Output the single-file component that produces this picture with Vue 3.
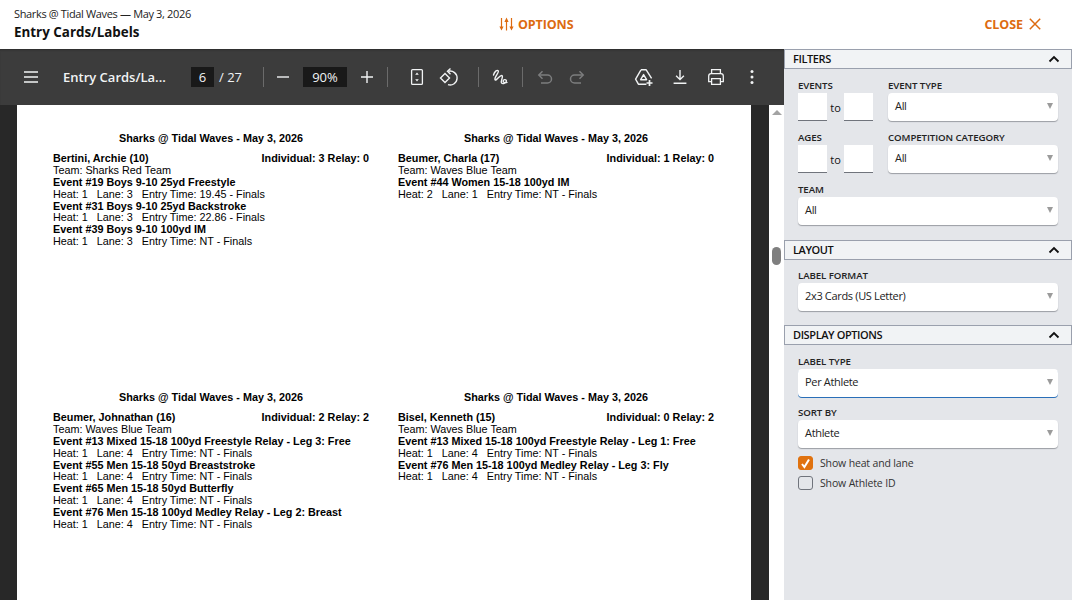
<script setup>
import { ref } from 'vue'

const cards = ref([
  {
    name: 'Bertini, Archie (10)',
    counts: 'Individual: 3 Relay: 0',
    team: 'Team: Sharks Red Team',
    entries: [
      { event: 'Event #19 Boys 9-10 25yd Freestyle', detail: ['Heat: 1', 'Lane: 3', 'Entry Time: 19.45 - Finals'] },
      { event: 'Event #31 Boys 9-10 25yd Backstroke', detail: ['Heat: 1', 'Lane: 3', 'Entry Time: 22.86 - Finals'] },
      { event: 'Event #39 Boys 9-10 100yd IM', detail: ['Heat: 1', 'Lane: 3', 'Entry Time: NT - Finals'] }
    ]
  },
  {
    name: 'Beumer, Charla (17)',
    counts: 'Individual: 1 Relay: 0',
    team: 'Team: Waves Blue Team',
    entries: [
      { event: 'Event #44 Women 15-18 100yd IM', detail: ['Heat: 2', 'Lane: 1', 'Entry Time: NT - Finals'] }
    ]
  },
  {
    name: 'Beumer, Johnathan (16)',
    counts: 'Individual: 2 Relay: 2',
    team: 'Team: Waves Blue Team',
    entries: [
      { event: 'Event #13 Mixed 15-18 100yd Freestyle Relay - Leg 3: Free', detail: ['Heat: 1', 'Lane: 4', 'Entry Time: NT - Finals'] },
      { event: 'Event #55 Men 15-18 50yd Breaststroke', detail: ['Heat: 1', 'Lane: 4', 'Entry Time: NT - Finals'] },
      { event: 'Event #65 Men 15-18 50yd Butterfly', detail: ['Heat: 1', 'Lane: 4', 'Entry Time: NT - Finals'] },
      { event: 'Event #76 Men 15-18 100yd Medley Relay - Leg 2: Breast', detail: ['Heat: 1', 'Lane: 4', 'Entry Time: NT - Finals'] }
    ]
  },
  {
    name: 'Bisel, Kenneth (15)',
    counts: 'Individual: 0 Relay: 2',
    team: 'Team: Waves Blue Team',
    entries: [
      { event: 'Event #13 Mixed 15-18 100yd Freestyle Relay - Leg 1: Free', detail: ['Heat: 1', 'Lane: 4', 'Entry Time: NT - Finals'] },
      { event: 'Event #76 Men 15-18 100yd Medley Relay - Leg 3: Fly', detail: ['Heat: 1', 'Lane: 4', 'Entry Time: NT - Finals'] }
    ]
  }
])

const showHeat = ref(true)
const showId = ref(false)
</script>

<template>
  <div class="app">
    <header class="top">
      <div class="top-title">
        <div class="meet">Sharks @ Tidal Waves — May 3, 2026</div>
        <div class="name">Entry Cards/Labels</div>
      </div>
      <button class="link options">
        <svg width="15" height="14" viewBox="0 0 15 14" fill="#dd6b10">
          <path d="M1.9 1h1.2v8.6h1.5L2.5 13.6.4 9.6h1.5zM6.9 5H5.4L7.5.5 9.6 5H8.1v8.5H6.9zM11.9 1h1.2v8.6h1.5l-2.1 4-2.1-4h1.5z" />
        </svg>
        OPTIONS
      </button>
      <button class="link close">
        CLOSE
        <svg width="12" height="12" viewBox="0 0 12 12" fill="none" stroke="#dd6b10" stroke-width="1.5">
          <path d="M.8.8l10.4 10.4M11.2.8L.8 11.2" />
        </svg>
      </button>
    </header>

    <div class="main">
      <section class="viewer">
        <div class="toolbar">
          <button class="tb-btn">
            <svg width="20" height="20" viewBox="0 0 20 20" stroke="#f1f3f4" stroke-width="1.5"><path d="M3 5h14M3 10h14M3 15h14" /></svg>
          </button>
          <span class="doc-title">Entry Cards/La...</span>
          <span class="page-box">6</span>
          <span class="page-total">/ 27</span>
          <span class="divider first"></span>
          <div class="tb-group">
            <button class="tb-btn">
              <svg width="20" height="20" viewBox="0 0 20 20" stroke="#f1f3f4" stroke-width="1.4"><path d="M4 10h12" /></svg>
            </button>
            <span class="zoom-box">90%</span>
            <button class="tb-btn">
              <svg width="20" height="20" viewBox="0 0 20 20" stroke="#f1f3f4" stroke-width="1.4"><path d="M4 10h12M10 4v12" /></svg>
            </button>
            <span class="divider"></span>
          </div>
          <div class="tb-group tight">
            <button class="tb-btn">
              <svg width="20" height="20" viewBox="0 0 20 20" fill="none" stroke="#f1f3f4" stroke-width="1.3">
                <rect x="4.6" y="2.6" width="10.8" height="14.8" rx="1" />
                <path d="M10 5.5l-1.8 2.2h3.6zM10 14.5l-1.8-2.2h3.6z" fill="#f1f3f4" stroke="none" />
              </svg>
            </button>
            <button class="tb-btn">
              <svg width="20" height="20" viewBox="0 0 20 20" fill="none" stroke="#f1f3f4" stroke-width="1.4">
                <path d="M9.5 4.2A7 7 0 1 1 9 17.7" />
                <path d="M11.5 1.5L8.5 4.3l3 2.9" />
                <path d="M6 6.5L1.5 11 6 15.5l4.5-4.5z" />
              </svg>
            </button>
          </div>
          <span class="divider sep-draw"></span>
          <button class="tb-btn draw">
            <svg width="20" height="20" viewBox="0 0 20 20" fill="none" stroke="#f1f3f4" stroke-width="1.4" stroke-linecap="round">
              <path d="M3.5 8C4.5 4.5 7 2.5 8.2 3.8c1.3 1.5-4 6-3.2 8.8.7 2.4 5-5 7-4 1.8.9-2 5.6-.4 7.4 1.4 1.5 5.2-.4 4.8-2.4-.3-1.5-3.4-1.2-3.2.6.1 1.4 2 1.8 3.8 1.2" />
            </svg>
          </button>
          <span class="divider sep-undo"></span>
          <div class="tb-group tight undo">
            <button class="tb-btn">
              <svg width="20" height="20" viewBox="0 0 20 20" fill="none" stroke="#7c7d7e" stroke-width="1.5">
                <path d="M6 16h6.5a4 4 0 0 0 0-8H4" />
                <path d="M7.5 4.3L3.8 8l3.7 3.7" />
              </svg>
            </button>
            <button class="tb-btn">
              <svg width="20" height="20" viewBox="0 0 20 20" fill="none" stroke="#7c7d7e" stroke-width="1.5">
                <path d="M14 16H7.5a4 4 0 0 1 0-8H16" />
                <path d="M12.5 4.3L16.2 8l-3.7 3.7" />
              </svg>
            </button>
          </div>
          <div class="tb-group right">
            <button class="tb-btn">
              <svg width="20" height="20" viewBox="0 0 20 20" fill="none" stroke="#f1f3f4" stroke-width="1.4" stroke-linejoin="round">
                <path d="M7 2.8h5.2l5.4 8.6M7 2.8L1.6 12.2l2.8 5h8" />
                <path d="M9.6 7.6l3 5.1H6.7z" />
                <path d="M15.5 13v6M12.5 16h6" stroke-width="1.7" />
              </svg>
            </button>
            <button class="tb-btn">
              <svg width="20" height="20" viewBox="0 0 20 20" fill="#f1f3f4">
                <path d="M10 13.6L5.6 9.2l1-1 2.7 2.7V3h1.4v7.9l2.7-2.7 1 1zM3.6 17v-1.5h12.8V17z" />
              </svg>
            </button>
            <button class="tb-btn">
              <svg width="20" height="20" viewBox="0 0 20 20" fill="none" stroke="#f1f3f4" stroke-width="1.3">
                <path d="M5.6 6.4V2.7h8.8v3.7" />
                <path d="M5.6 14.6H2.7V9a2.4 2.4 0 0 1 2.4-2.4h9.8A2.4 2.4 0 0 1 17.3 9v5.6h-2.9" />
                <path d="M5.6 11.6h8.8v5.7H5.6z" />
              </svg>
            </button>
            <button class="tb-btn">
              <svg width="20" height="20" viewBox="0 0 20 20" fill="#f1f3f4">
                <circle cx="10" cy="4.5" r="1.5" />
                <circle cx="10" cy="10" r="1.5" />
                <circle cx="10" cy="15.5" r="1.5" />
              </svg>
            </button>
          </div>
        </div>

        <div class="pdf-area">
          <div class="page">
            <div v-for="card in cards" :key="card.name" class="card">
              <div class="card-head">Sharks @ Tidal Waves - May 3, 2026</div>
              <div class="card-top">
                <b>{{ card.name }}</b>
                <b>{{ card.counts }}</b>
              </div>
              <div>{{ card.team }}</div>
              <template v-for="entry in card.entries" :key="entry.event">
                <div><b>{{ entry.event }}</b></div>
                <div class="detail">
                  <span v-for="part in entry.detail" :key="part">{{ part }}</span>
                </div>
              </template>
            </div>
          </div>
          <div class="scrollbar">
            <span class="arrow"></span>
            <span class="thumb"></span>
          </div>
        </div>
      </section>

      <aside class="panel">
        <div class="sec-head">
          <span>FILTERS</span>
          <svg width="12" height="8" viewBox="0 0 12 8" fill="none" stroke="#111" stroke-width="1.8"><path d="M1.5 6.5L6 2l4.5 4.5" /></svg>
        </div>
        <div class="sec-body filters">
          <div class="field range">
            <label>EVENTS</label>
            <div class="range-row">
              <input type="text" class="num">
              <span>to</span>
              <input type="text" class="num">
            </div>
          </div>
          <div class="field">
            <label>EVENT TYPE</label>
            <div class="select">All<i></i></div>
          </div>
          <div class="field range">
            <label>AGES</label>
            <div class="range-row">
              <input type="text" class="num">
              <span>to</span>
              <input type="text" class="num">
            </div>
          </div>
          <div class="field">
            <label>COMPETITION CATEGORY</label>
            <div class="select">All<i></i></div>
          </div>
          <div class="field wide">
            <label>TEAM</label>
            <div class="select">All<i></i></div>
          </div>
        </div>

        <div class="sec-head">
          <span>LAYOUT</span>
          <svg width="12" height="8" viewBox="0 0 12 8" fill="none" stroke="#111" stroke-width="1.8"><path d="M1.5 6.5L6 2l4.5 4.5" /></svg>
        </div>
        <div class="sec-body">
          <div class="field">
            <label>LABEL FORMAT</label>
            <div class="select">2x3 Cards (US Letter)<i></i></div>
          </div>
        </div>

        <div class="sec-head">
          <span>DISPLAY OPTIONS</span>
          <svg width="12" height="8" viewBox="0 0 12 8" fill="none" stroke="#111" stroke-width="1.8"><path d="M1.5 6.5L6 2l4.5 4.5" /></svg>
        </div>
        <div class="sec-body stack">
          <div class="field">
            <label>LABEL TYPE</label>
            <div class="select focused">Per Athlete<i></i></div>
          </div>
          <div class="field">
            <label>SORT BY</label>
            <div class="select">Athlete<i></i></div>
          </div>
          <div class="checks">
            <div class="check" @click="showHeat = !showHeat">
              <span class="box" :class="{ on: showHeat }">
                <svg v-if="showHeat" width="11" height="11" viewBox="0 0 11 11" fill="none" stroke="#fff" stroke-width="2"><path d="M2 6l2.4 3L9 1.5" /></svg>
              </span>
              Show heat and lane
            </div>
            <div class="check" @click="showId = !showId">
              <span class="box" :class="{ on: showId }">
                <svg v-if="showId" width="11" height="11" viewBox="0 0 11 11" fill="none" stroke="#fff" stroke-width="2"><path d="M2 6l2.4 3L9 1.5" /></svg>
              </span>
              Show Athlete ID
            </div>
          </div>
        </div>
      </aside>
    </div>
  </div>
</template>

<style scoped>
.app {
  width: 1072px;
  height: 600px;
  display: flex;
  flex-direction: column;
  overflow: hidden;
  font-family: "Open Sans", sans-serif;
  color: #111;
  background: #fff;
}

button {
  border: none;
  background: none;
  padding: 0;
  font-family: inherit;
}

/* top bar */
.top {
  height: 49px;
  flex: none;
  display: flex;
  align-items: flex-start;
  position: relative;
}

.top-title {
  margin-left: 14px;
  width: 485px;
  padding-top: 5px;
}

.meet {
  font-size: 11px;
  letter-spacing: -0.35px;
  line-height: 17px;
  color: #222;
}

.name {
  font-size: 13.4px;
  font-weight: 700;
  line-height: 20px;
}

.link {
  display: flex;
  align-items: center;
  color: #dd6b10;
  font-size: 12.5px;
  font-weight: 700;
  letter-spacing: -0.1px;
  height: 16px;
  margin-top: 16px;
}

.options {
  gap: 4px;
}

.close {
  margin-left: 411px;
  gap: 6px;
}

/* pdf viewer */
.main {
  flex: 1;
  display: flex;
  min-height: 0;
}

.viewer {
  width: 784px;
  flex: none;
  display: flex;
  flex-direction: column;
  background: #282828;
}

.toolbar {
  height: 56px;
  flex: none;
  display: flex;
  align-items: center;
  padding: 0 16px 0 15px;
  background: #3c3c3c;
  color: #f1f3f4;
  box-shadow: inset 0 2px 2px -1px #2c2c2c;
}

.tb-btn {
  width: 32px;
  height: 32px;
  flex: none;
  display: flex;
  align-items: center;
  justify-content: center;
}

.tb-group {
  display: flex;
  align-items: center;
  gap: 4px;
}

.tb-group.tight {
  gap: 0;
  margin-left: 13px;
}

.tb-group.right {
  margin-left: auto;
}

.doc-title {
  width: 104px;
  margin-left: 16px;
  font-size: 13px;
  font-weight: 600;
  white-space: nowrap;
}

.page-box {
  width: 23px;
  height: 20px;
  margin-left: 24px;
  background: #191919;
  text-align: center;
  font-size: 13px;
  line-height: 20px;
}

.page-total {
  width: 28px;
  margin-left: 5px;
  font-size: 13px;
}

.divider {
  width: 1px;
  height: 20px;
  flex: none;
  background: #6b6b6b;
}

.divider.first {
  margin-left: 16px;
  margin-right: 3px;
}

.sep-draw {
  margin-left: 13px;
}

.draw {
  margin-left: 5px;
}

.sep-undo {
  margin-left: 6px;
}

.tb-group.tight.undo {
  margin-left: 6px;
}

.zoom-box {
  width: 44px;
  height: 20px;
  background: #191919;
  text-align: center;
  font-size: 13px;
  line-height: 20px;
}

/* pdf page */
.pdf-area {
  flex: 1;
  min-height: 0;
  display: flex;
  justify-content: space-between;
  padding-left: 17px;
  overflow: hidden;
}

.page {
  width: 734px;
  height: 760px;
  flex: none;
  background: #fff;
  display: grid;
  grid-template-columns: 316px 316px;
  grid-auto-rows: 259px;
  column-gap: 29px;
  padding: 28px 36px 0;
  box-sizing: border-box;
  color: #000;
  font-family: "Liberation Sans", Arial, sans-serif;
  font-size: 10.8px;
  line-height: 11.9px;
}

.card-head {
  text-align: center;
  font-weight: 700;
  margin-bottom: 8px;
}

.card-top {
  display: flex;
  justify-content: space-between;
}

.detail {
  display: flex;
  gap: 9px;
}

.scrollbar {
  width: 15px;
  flex: none;
  background: #fff;
  position: relative;
}

.arrow {
  position: absolute;
  top: 5px;
  left: 3px;
  border-left: 5px solid transparent;
  border-right: 5px solid transparent;
  border-bottom: 5px solid #a3a3a3;
}

.thumb {
  position: absolute;
  top: 142px;
  left: 3px;
  width: 9px;
  height: 18px;
  border-radius: 5px;
  background: #7f7f7f;
}

/* options panel */
.panel {
  flex: 1;
  background: #e4e6ea;
  font-size: 11px;
  overflow: hidden;
}

.sec-head {
  height: 17px;
  display: flex;
  align-items: center;
  justify-content: space-between;
  padding: 0 11px 1px 8px;
  background: #f1f3f5;
  border: 1px solid #9aa0ad;
  font-size: 11px;
  font-weight: 600;
  letter-spacing: -0.4px;
  color: #111;
}

.sec-body {
  padding: 9px 14px 14px;
}

.filters {
  display: grid;
  grid-template-columns: 75px 170px;
  column-gap: 15px;
  row-gap: 10px;
  padding-top: 10px;
  padding-bottom: 15px;
}

.wide {
  grid-column: 1 / 3;
}

.stack {
  display: flex;
  flex-direction: column;
  gap: 9px;
  padding-top: 10px;
}

.field label {
  display: block;
  font-size: 9.7px;
  font-weight: 600;
  line-height: 14px;
  height: 14px;
  letter-spacing: -0.1px;
  color: #222;
}

.range-row {
  display: flex;
  align-items: center;
  justify-content: space-between;
  font-size: 11px;
}

.num {
  width: 29px;
  height: 28px;
  border: none;
  border-bottom: 1px solid #70747c;
  box-sizing: border-box;
  background: #fff;
  padding: 0;
}

.select {
  height: 28px;
  box-sizing: border-box;
  display: flex;
  align-items: center;
  justify-content: space-between;
  padding: 0 5px 4px 7px;
  background: #fff;
  border-radius: 4px;
  box-shadow: 0 1px 1px #9a9da3;
  font-size: 11px;
  letter-spacing: -0.33px;
  color: #222;
}

.select i {
  border-left: 3px solid transparent;
  border-right: 3px solid transparent;
  border-top: 6px solid #9b9b9b;
  margin-top: 2px;
}

.select.focused {
  box-shadow: 0 1px 0 #2a6fb8;
}

.checks {
  display: flex;
  flex-direction: column;
  gap: 6px;
  margin-top: -1px;
}

.check {
  display: flex;
  align-items: center;
  gap: 7px;
  height: 14px;
  font-size: 10.5px;
  letter-spacing: -0.15px;
  color: #333;
}

.box {
  width: 15px;
  height: 14px;
  box-sizing: border-box;
  display: flex;
  align-items: center;
  justify-content: center;
  border: 1px solid #70747c;
  border-radius: 3px;
}

.box.on {
  background: #e0720f;
  border-color: #e0720f;
}
</style>
